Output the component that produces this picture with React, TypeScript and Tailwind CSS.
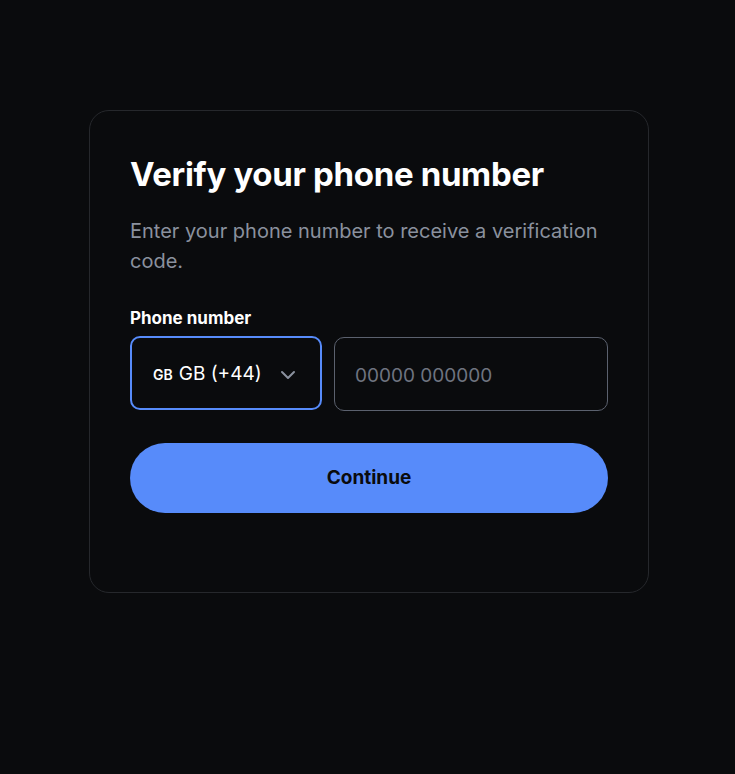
import { ChevronDown } from 'lucide-react';

export default function App() {
  return (
    <div
      className="min-h-[774px] w-full bg-[#0a0b0d] pt-[110px] text-white"
      style={{ fontFamily: 'Inter, "Noto Sans", sans-serif' }}
    >
      <div className="ml-[89px] w-[560px] rounded-[20px] border border-[#26282c] bg-[#0a0b0d] px-10 pb-[79px] pt-[43px]">
        <h1 className="text-[33px] font-bold leading-[40px] tracking-[-0.01em] text-white">
          Verify your phone number
        </h1>
        <p className="mt-[22px] text-[20px] leading-[30px] text-[#8a919e]">
          Enter your phone number to receive a verification code.
        </p>

        <label className="mt-[30px] block text-[17px] font-bold leading-6 text-white">
          Phone number
        </label>
        <div className="mt-[6px] flex gap-3">
          <button className="flex h-[74px] w-[192px] shrink-0 items-center whitespace-nowrap rounded-[10px] border-2 border-[#578bfa] pl-[21px] pr-5 pt-[3px]">
            <span className="text-[14px] font-semibold">GB</span>
            <span className="ml-[6px] text-[19px]">GB (+44)</span>
            <ChevronDown className="ml-auto h-6 w-6 text-[#8a919e]" strokeWidth={2} />
          </button>
          <input
            className="mt-px h-[74px] w-0 flex-1 rounded-[10px] border border-[#5b616e] bg-transparent px-5 pt-[2px] text-[19px] text-white outline-none placeholder:text-[#6f7480]"
            placeholder="00000 000000"
          />
        </div>

        <button className="mt-[32px] h-[70px] w-full rounded-full bg-[#578bfa] text-[19px] font-bold text-[#0a0b0d]">
          Continue
        </button>
      </div>
    </div>
  );
}
